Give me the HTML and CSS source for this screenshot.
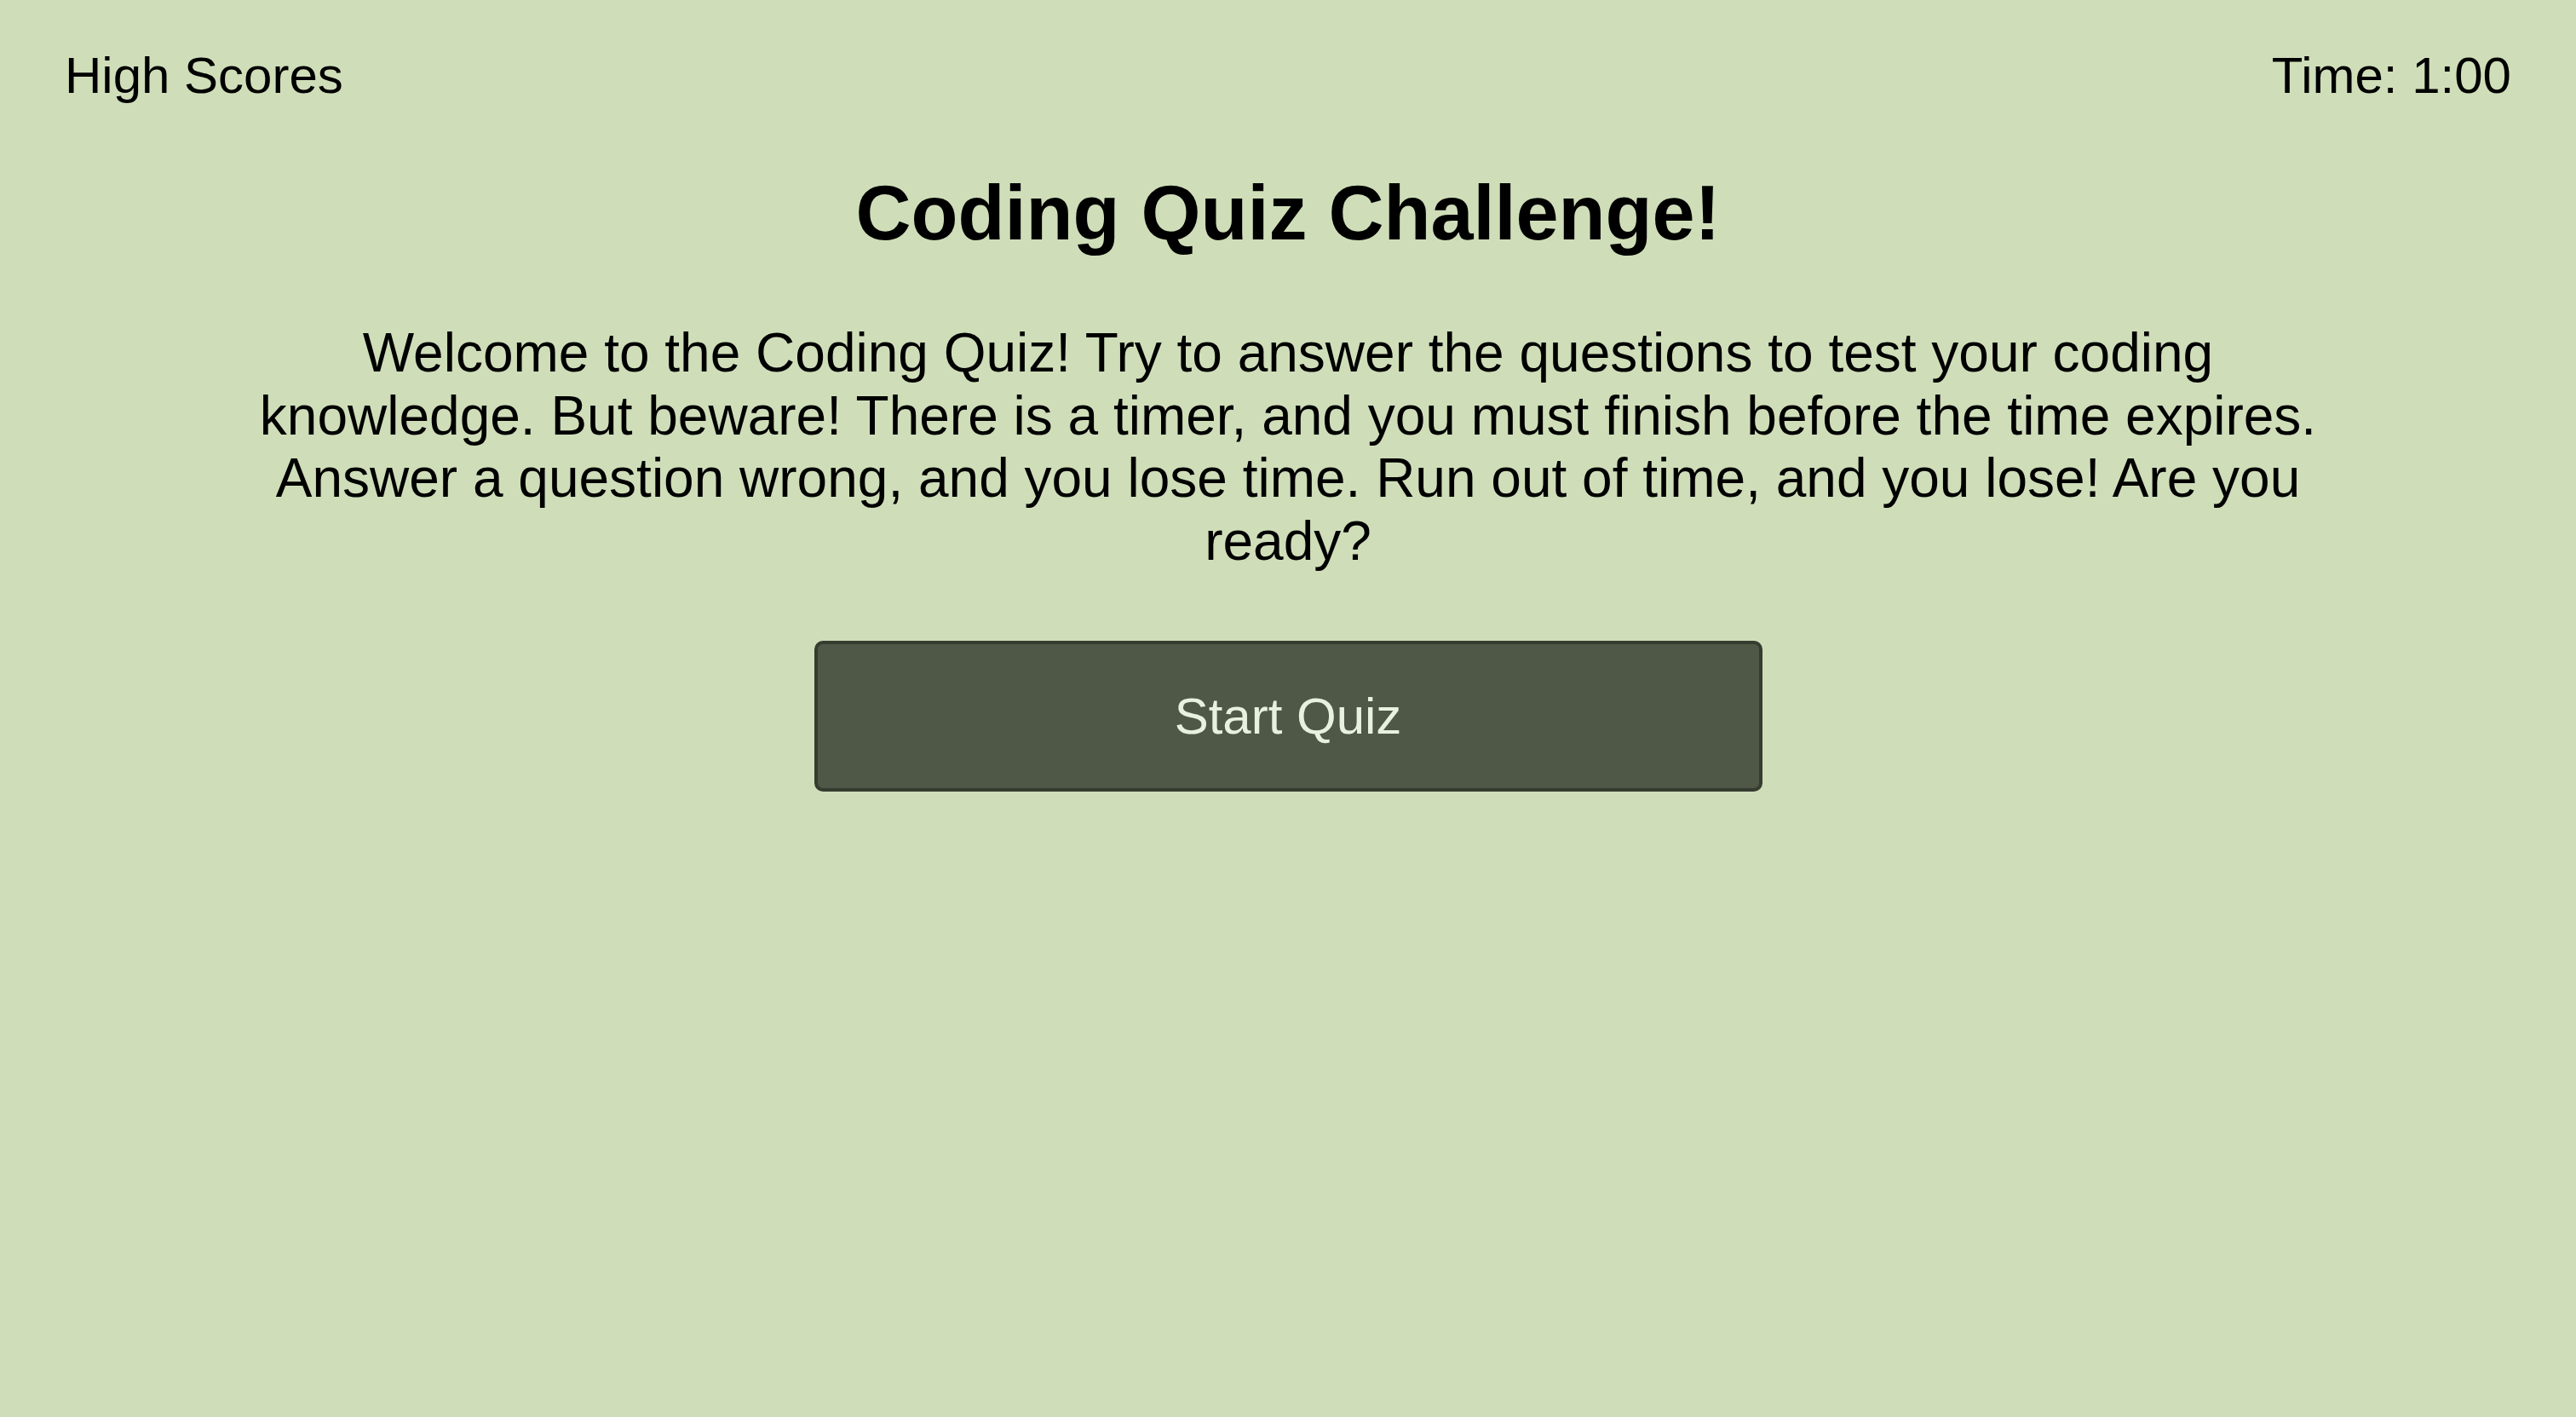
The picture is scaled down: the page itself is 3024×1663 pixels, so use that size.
FILE: index.html
```html
<!DOCTYPE html>
<html lang="en">
<head>
<meta charset="utf-8">
<title>Coding Quiz Challenge</title>
<link rel="stylesheet" href="styles.css">
</head>
<body>
<header class="topbar">
  <a class="high-scores">High Scores</a>
  <div class="timer">Time: 1:00</div>
</header>
<main class="intro">
  <h1 class="title">Coding Quiz Challenge!</h1>
  <p class="description">Welcome to the Coding Quiz! Try to answer the questions to test your coding knowledge. But beware! There is a timer, and you must finish before the time expires. Answer a question wrong, and you lose time. Run out of time, and you lose! Are you ready?</p>
  <button class="start-btn">Start Quiz</button>
</main>
</body>
</html>
```
FILE: styles.css
```css
html, body {
  margin: 0;
  padding: 0;
}

body {
  background: #cfdeb9;
  color: #000;
  font-family: "Liberation Sans", Arial, Helvetica, sans-serif;
  min-height: 100vh;
}

.topbar {
  display: flex;
  justify-content: space-between;
  align-items: flex-start;
  padding: 54px 76px 0 76px;
  font-size: 60px;
  line-height: 69px;
}

.high-scores {
  color: #000;
  text-decoration: none;
  cursor: pointer;
}

.intro {
  display: flex;
  flex-direction: column;
  align-items: center;
  text-align: center;
}

.title {
  margin: 76px 0 0;
  font-size: 90px;
  line-height: 103px;
  font-weight: bold;
}

.description {
  margin: 76px auto 0;
  max-width: 2460px;
  font-size: 64px;
  line-height: 73.5px;
}

.start-btn {
  margin-top: 80px;
  width: 1113px;
  height: 177px;
  box-sizing: border-box;
  background: #4f5746;
  border: 4px solid #363c30;
  border-radius: 10px;
  color: #e8f0de;
  font-family: "Liberation Sans", Arial, Helvetica, sans-serif;
  font-size: 60px;
  cursor: pointer;
  padding: 0;
}
```
